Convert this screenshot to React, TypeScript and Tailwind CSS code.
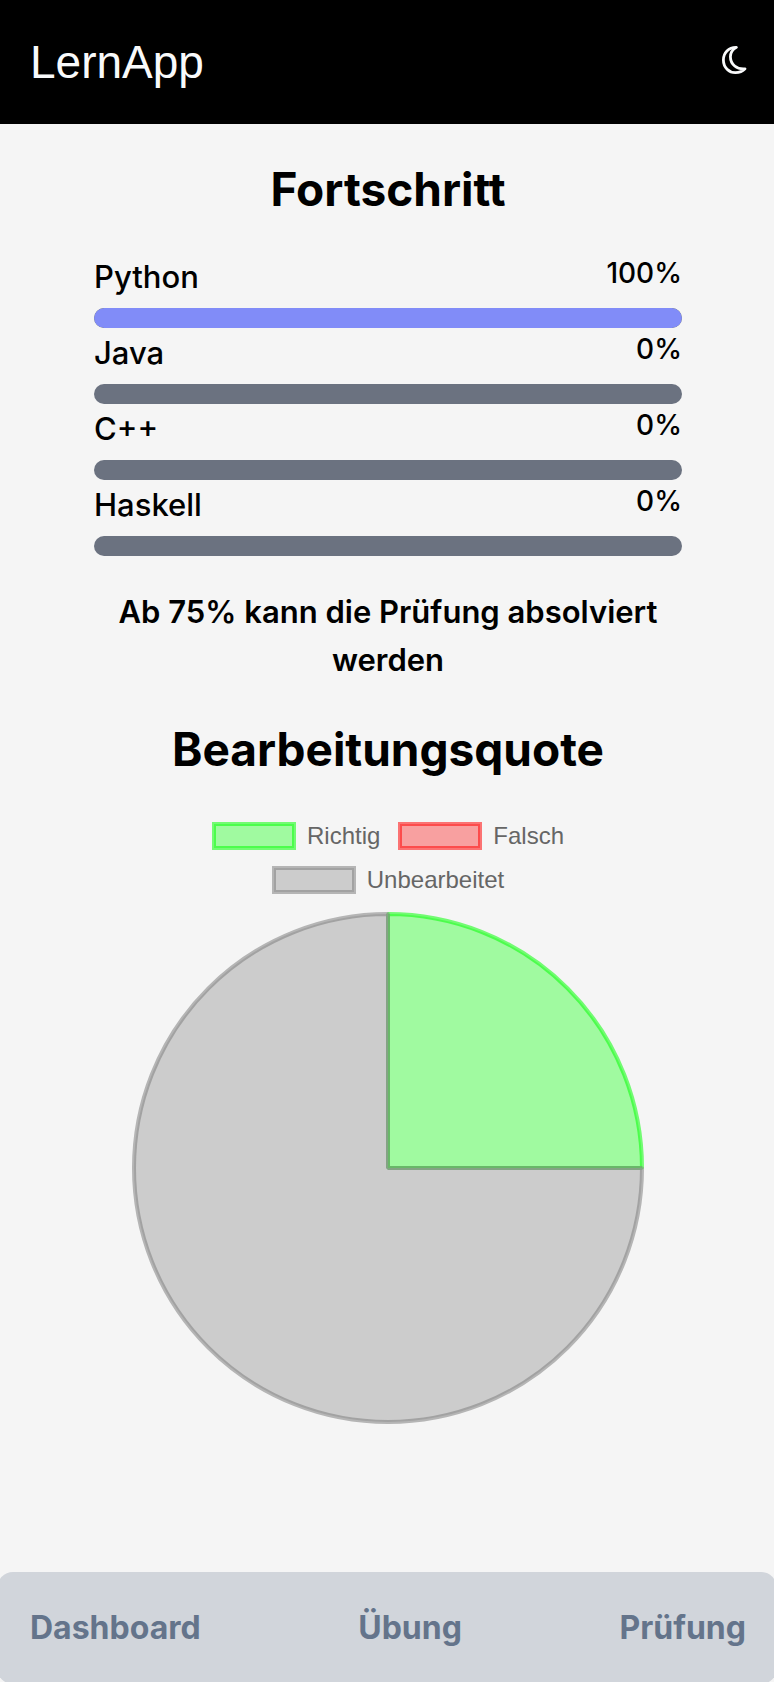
import React from "react";

type Course = { name: string; progress: number };

const courses: Course[] = [
  { name: "Python", progress: 100 },
  { name: "Java", progress: 0 },
  { name: "C++", progress: 0 },
  { name: "Haskell", progress: 0 },
];

function MoonIcon() {
  return (
    <svg
      viewBox="0 0 28 32"
      className="h-8 w-7"
      fill="none"
      stroke="currentColor"
      strokeWidth="2.8"
      strokeLinejoin="round"
      aria-hidden="true"
    >
      <path d="M16.400 3.400C8.500 3.200 3.400 9 3.400 16c0 7.600 5.800 12.600 12 12.600 4 0 7.600-1.600 9.600-3.800C17 25.600 10.400 20.500 10.400 12.800 10.400 8.500 12.800 5.400 16.400 3.400Z" />
    </svg>
  );
}

function ProgressRow({ name, progress }: Course) {
  const id = `progress-${name}`;
  return (
    <li>
      <div className="flex h-14 items-start justify-between font-medium">
        <span id={id} className="text-[31px] leading-[50px]">
          {name}
        </span>
        <span className="text-[28px] leading-[42px]">{progress}%</span>
      </div>
      <div
        role="progressbar"
        aria-labelledby={id}
        aria-valuenow={progress}
        aria-valuemin={0}
        aria-valuemax={100}
        className="h-5 overflow-hidden rounded-full bg-[#6b7280]"
      >
        <div className="h-full rounded-full bg-[#818cf8]" style={{ width: `${progress}%` }} />
      </div>
    </li>
  );
}

type Tone = { fill: string; stroke: string };

const green: Tone = { fill: "#4bff4b", stroke: "#08ff08" };
const red: Tone = { fill: "#fb4b4b", stroke: "#ff0808" };
const grey: Tone = { fill: "#a3a3a3", stroke: "#808080" };

function LegendItem({ label, tone }: { label: string; tone: Tone }) {
  return (
    <li className="flex items-center gap-[11px]">
      <svg width="84" height="28" aria-hidden="true">
        <rect
          x="2"
          y="2"
          width="80"
          height="24"
          fill={tone.fill}
          fillOpacity="0.5"
          stroke={tone.stroke}
          strokeOpacity="0.55"
          strokeWidth="4"
        />
      </svg>
      <span>{label}</span>
    </li>
  );
}

function PieChart() {
  return (
    <svg viewBox="0 0 512 512" className="mt-[18px] w-full max-w-[512px]" role="img" aria-label="Bearbeitungsquote">
      <g strokeWidth="4" fillOpacity="0.5" strokeOpacity="0.55" strokeLinejoin="bevel">
        <path d="M256 256V2A254 254 0 0 1 510 256Z" fill={green.fill} stroke={green.stroke} />
        <path d="M256 256H510A254 254 0 1 1 256 2Z" fill={grey.fill} stroke={grey.stroke} />
      </g>
    </svg>
  );
}

export default function App() {
  return (
    <div className="flex min-h-screen flex-col overflow-hidden bg-[#f5f5f5] font-['Inter','Liberation_Sans',sans-serif] text-black">
      <header className="flex h-[124px] items-center justify-between bg-black pr-[26px] pl-[30px] text-gray-50">
        <a href="#" className="font-['Liberation_Sans',sans-serif] text-[46px] leading-none">
          LernApp
        </a>
        <button type="button" aria-label="Dunkelmodus" className="pb-1">
          <MoonIcon />
        </button>
      </header>

      <main className="flex flex-1 flex-col items-center pr-[92px] pl-[94px]">
        <h1 className="mt-8 text-[46px] leading-[66px] font-bold">Fortschritt</h1>
        <ul className="mt-[30px] w-full">
          {courses.map((course) => (
            <ProgressRow key={course.name} {...course} />
          ))}
        </ul>
        <p className="mt-8 text-center text-[31px] leading-[48px] font-semibold">
          Ab 75% kann die Prüfung absolviert werden
        </p>
        <h2 className="mt-8 text-[46px] leading-[66px] font-bold">Bearbeitungsquote</h2>
        <ul className="mt-10 flex max-w-[420px] flex-wrap justify-center gap-x-[18px] gap-y-4 font-['Liberation_Sans',sans-serif] text-[24px] leading-7 text-[#666]">
          <LegendItem label="Richtig" tone={green} />
          <LegendItem label="Falsch" tone={red} />
          <LegendItem label="Unbearbeitet" tone={grey} />
        </ul>
        <PieChart />
      </main>

      <nav className="-mx-[3px] -mb-[2px] flex h-28 items-center justify-between rounded-2xl bg-[#d1d5db] pr-[31px] pl-[33px] text-[32px] font-bold text-[#64748b]">
        <a href="#dashboard">Dashboard</a>
        <a href="#uebung">Übung</a>
        <a href="#pruefung">Prüfung</a>
      </nav>
    </div>
  );
}
